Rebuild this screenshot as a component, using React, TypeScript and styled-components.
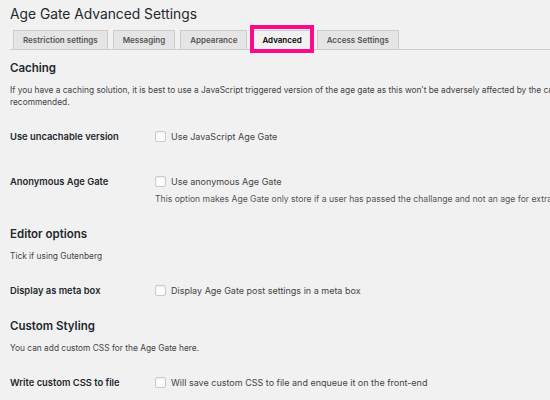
import React, { useState } from 'react';
import styled, { createGlobalStyle } from 'styled-components';

const GlobalStyle = createGlobalStyle`
  html, body {
    margin: 0;
    padding: 0;
    background: #f1f1f1;
    overflow: hidden;
  }
  body {
    font-family: Inter, "Noto Sans", sans-serif;
    color: #444;
  }
`;

const Wrap = styled.div`
  width: 640px;
  padding: 4px 0 0 10px;
`;

const Title = styled.h1`
  margin: 0;
  font-size: 13.8px;
  font-weight: 400;
  line-height: 20px;
  color: #23282d;
`;

const TabBar = styled.nav`
  display: flex;
  gap: 5px;
  margin: 6px 0 10px;
  padding-left: 3px;
  border-bottom: 1px solid #ccc;
`;

const Tab = styled.a<{ $active?: boolean }>`
  position: relative;
  display: block;
  margin-bottom: -1px;
  padding: 4px 9px;
  font-size: 8px;
  font-weight: 600;
  line-height: 10px;
  border: 1px solid #ccc;
  border-bottom-color: ${(p) => (p.$active ? '#f1f1f1' : '#ccc')};
  background: ${(p) => (p.$active ? '#f1f1f1' : '#e5e5e5')};
  color: ${(p) => (p.$active ? '#000' : '#555')};
  text-decoration: none;
  cursor: pointer;

  ${(p) =>
    p.$active &&
    `
    &::after {
      content: '';
      position: absolute;
      left: -3px;
      right: -3px;
      top: -6px;
      bottom: -4px;
      border: 4px solid #fc0a8c;
    }
  `}
`;

const SectionTitle = styled.h2`
  margin: 5px 0 0;
  font-size: 11.5px;
  font-weight: 600;
  line-height: 16px;
  color: #23282d;
`;

const Intro = styled.p`
  margin: 8px 0 0;
  font-size: 8.35px;
  line-height: 12px;
  color: #444;
`;

const FormTable = styled.div`
  margin-top: 6px;
`;

const Row = styled.div`
  display: grid;
  grid-template-columns: 145px 1fr;
  padding: 16px 0;
`;

const RowLabel = styled.div`
  font-size: 9.4px;
  font-weight: 600;
  line-height: 13px;
  color: #23282d;
`;

const Field = styled.div`
  display: flex;
  flex-direction: column;
  gap: 5px;
`;

const CheckLabel = styled.label`
  display: flex;
  align-items: center;
  gap: 5px;
  font-size: 9px;
  line-height: 13px;
  color: #444;
  cursor: pointer;
`;

const Box = styled.span<{ $on: boolean }>`
  width: 9px;
  height: 9px;
  border: 1px solid #c8cbcf;
  border-radius: 2px;
  background: #fdfdfd;
  box-shadow: inset 0 1px 2px rgba(0, 0, 0, 0.07);
  display: flex;
  align-items: center;
  justify-content: center;
  font-size: 8px;
  color: #1e8cbe;
`;

const Description = styled.p`
  margin: 0;
  font-size: 8.6px;
  line-height: 12px;
  color: #555;
`;

type CheckProps = { text: string };

const Check = ({ text }: CheckProps) => {
  const [on, setOn] = useState(false);
  return (
    <CheckLabel onClick={() => setOn(!on)}>
      <Box $on={on}>{on ? '✓' : ''}</Box>
      {text}
    </CheckLabel>
  );
};

const tabs = ['Restriction settings', 'Messaging', 'Appearance', 'Advanced', 'Access Settings'];

const App = () => {
  const [active, setActive] = useState('Advanced');

  return (
    <Wrap>
      <GlobalStyle />
      <Title>Age Gate Advanced Settings</Title>
      <TabBar>
        {tabs.map((t) => (
          <Tab key={t} $active={t === active} onClick={() => setActive(t)}>
            {t}
          </Tab>
        ))}
      </TabBar>

      <SectionTitle>Caching</SectionTitle>
      <Intro>
        If you have a caching solution, it is best to use a JavaScript triggered version of the age gate as this
        won&rsquo;t be adversely affected by the caching. This is recommended.
      </Intro>
      <FormTable>
        <Row>
          <RowLabel>Use uncachable version</RowLabel>
          <Field>
            <Check text="Use JavaScript Age Gate" />
          </Field>
        </Row>
        <Row>
          <RowLabel>Anonymous Age Gate</RowLabel>
          <Field>
            <Check text="Use anonymous Age Gate" />
            <Description>
              This option makes Age Gate only store if a user has passed the challange and not an age for extra privacy
            </Description>
          </Field>
        </Row>
      </FormTable>

      <SectionTitle>Editor options</SectionTitle>
      <Intro>Tick if using Gutenberg</Intro>
      <FormTable>
        <Row>
          <RowLabel>Display as meta box</RowLabel>
          <Field>
            <Check text="Display Age Gate post settings in a meta box" />
          </Field>
        </Row>
      </FormTable>

      <SectionTitle>Custom Styling</SectionTitle>
      <Intro>You can add custom CSS for the Age Gate here.</Intro>
      <FormTable>
        <Row>
          <RowLabel>Write custom CSS to file</RowLabel>
          <Field>
            <Check text="Will save custom CSS to file and enqueue it on the front-end" />
          </Field>
        </Row>
      </FormTable>
    </Wrap>
  );
};

export default App;
